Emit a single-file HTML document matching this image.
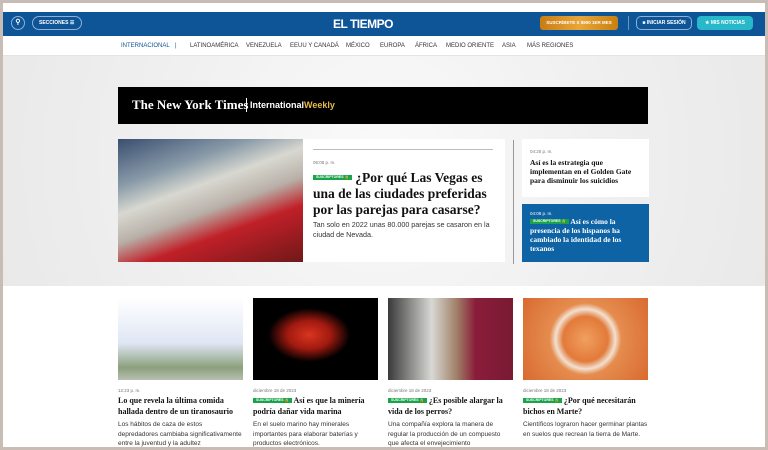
<!DOCTYPE html>
<html><head><meta charset="utf-8"><style>
*{margin:0;padding:0;box-sizing:border-box}
body{width:768px;height:450px;overflow:hidden;background:#c8bcb4;font-family:"Liberation Sans",sans-serif;position:relative}
.frame{position:absolute;left:3px;top:3px;width:762px;height:444px;background:#fff;overflow:hidden}
.hdr{position:absolute;left:0;top:9px;width:762px;height:24px;background:#0e5597}
.nav{position:absolute;left:0;top:33px;width:762px;height:20px;background:#fff;border-bottom:1px solid #e4e4e4;font-size:6px;color:#333}
.nav span{position:absolute;top:7px}
.hero{position:absolute;left:0;top:53px;width:762px;height:230px;background:radial-gradient(circle at 380px 100px,#fafafa 0,#efefef 60%,#e9e9e9 100%)}
.btn{position:absolute;border:1px solid #8fb0d4;border-radius:5px;color:#fff;font-size:5px;font-weight:bold}
.serif{font-family:"Liberation Serif",serif;font-weight:bold}
.tag{display:inline-block;background:#1aa34a;color:#fff;font-size:3.5px;line-height:5px;font-family:"Liberation Sans",sans-serif;padding:0 3px;vertical-align:middle;font-weight:bold;position:relative;top:-1px}
.card{position:absolute;top:295px;width:125px}
.card .im{height:82px}
.card .d{font-size:4.5px;color:#777;margin-top:8px}
.card h3{font-size:8px;line-height:10.5px;color:#111;margin-top:3px}
.card p{font-size:6.5px;line-height:9.5px;color:#333;margin-top:3px}
</style></head><body><div class="frame">
<div class="hdr">
 <div class="btn" style="left:8px;top:4px;width:14px;height:14px;border-radius:7px;text-align:center;line-height:12px;font-size:7px">&#9906;</div>
 <div class="btn" style="left:29px;top:4px;width:50px;height:14px;border-radius:7px;line-height:12px;padding-left:6px">SECCIONES ☰</div>
 <div style="position:absolute;left:330px;top:5px;color:#fff;font-weight:bold;font-size:12px;letter-spacing:-0.5px">EL TIEMPO</div>
 <div style="position:absolute;left:537px;top:4px;width:78px;height:14px;border-radius:3px;background:linear-gradient(90deg,#c87c12,#e9a63a,#c8800f);color:#fff;font-size:4.5px;font-weight:bold;line-height:14px;text-align:center">SUSCRÍBETE X $900 1ER MES</div>
 <div style="position:absolute;left:625px;top:4px;width:1px;height:14px;background:#6b93c0"></div>
 <div class="btn" style="left:633px;top:4px;width:56px;height:14px;line-height:12px;text-align:center">&#9632; INICIAR SESIÓN</div>
 <div style="position:absolute;left:694px;top:4px;width:56px;height:14px;border-radius:4px;background:#27b8c9;color:#fff;font-size:5px;font-weight:bold;line-height:14px;text-align:center">★ MIS NOTICIAS</div>
</div>
<div class="nav">
 <span style="left:118px;color:#0e5597">INTERNACIONAL</span><span style="left:172px;color:#0e5597">|</span>
 <span style="left:187px">LATINOAMÉRICA</span><span style="left:243px">VENEZUELA</span><span style="left:287px">EEUU Y CANADÁ</span><span style="left:343px">MÉXICO</span><span style="left:377px">EUROPA</span><span style="left:412px">ÁFRICA</span><span style="left:443px">MEDIO ORIENTE</span><span style="left:499px">ASIA</span><span style="left:524px">MÁS REGIONES</span>
</div>
<div class="hero">
 <div style="position:absolute;left:115px;top:31px;width:530px;height:37px;background:#000;color:#fff">
  <span style="position:absolute;left:14px;top:10px;font-family:'Liberation Serif',serif;font-size:13px;font-weight:bold;white-space:nowrap">The New York Times</span>
  <span style="position:absolute;left:128px;top:11px;width:1px;height:14px;background:#fff"></span>
  <span style="position:absolute;left:132px;top:13px;font-size:9px;font-weight:bold">International<span style="color:#e8b94a">Weekly</span></span>
 </div>
 <div style="position:absolute;left:115px;top:83px;width:387px;height:123px;background:#fff">
  <div style="position:absolute;left:0;top:0;width:185px;height:123px;background:linear-gradient(160deg,#3a4e70 0,#889aa8 25%,#d8d8d0 40%,#b8b0a8 55%,#c02028 70%,#701818 100%)"></div>
  <div style="position:absolute;left:195px;top:10px;width:180px;height:1px;background:#bbb"></div>
  <div style="position:absolute;left:195px;top:21px;font-size:4.5px;color:#777">05:08 p. m.</div>
  <div class="serif" style="position:absolute;left:195px;top:31px;width:190px;font-size:13.5px;line-height:16px;color:#111"><span class="tag">SUSCRIPTORES 🔒</span> ¿Por qué Las Vegas es una de las ciudades preferidas por las parejas para casarse?</div>
  <div style="position:absolute;left:195px;top:81px;width:185px;font-size:7.2px;line-height:10px;color:#333">Tan solo en 2022 unas 80.000 parejas se casaron en la ciudad de Nevada.</div>
 </div>
 <div style="position:absolute;left:510px;top:84px;width:1px;height:124px;background:#999"></div>
 <div style="position:absolute;left:519px;top:83px;width:127px;height:58px;background:#fff">
  <div style="position:absolute;left:8px;top:10px;font-size:4.5px;color:#777">04:25 p. m.</div>
  <div class="serif" style="position:absolute;left:8px;top:19px;width:108px;font-size:7.5px;line-height:9px;color:#111">Así es la estrategia que implementan en el Golden Gate para disminuir los suicidios</div>
 </div>
 <div style="position:absolute;left:519px;top:148px;width:127px;height:58px;background:#0e63a5;color:#fff">
  <div style="position:absolute;left:8px;top:7px;font-size:4.5px">04:08 p. m.</div>
  <div class="serif" style="position:absolute;left:8px;top:13px;width:108px;font-size:7.5px;line-height:9px"><span class="tag">SUSCRIPTORES 🔒</span> Así es cómo la presencia de los hispanos ha cambiado la identidad de los texanos</div>
 </div>
</div>
<div class="card" style="left:115px"><div class="im" style="background:linear-gradient(180deg,#fff 0,#dfe6f4 55%,#8ca07c 85%,#b8c0b0 100%)"></div><div class="d">12:23 p. m.</div><h3 class="serif">Lo que revela la última comida hallada dentro de un tiranosaurio</h3><p>Los hábitos de caza de estos depredadores cambiaba significativamente entre la juventud y la adultez</p></div>
<div class="card" style="left:250px"><div class="im" style="background:radial-gradient(ellipse at 45% 45%,#d8351e 0,#a21a10 22%,#000 42%)"></div><div class="d">diciembre 18 de 2023</div><h3 class="serif"><span class="tag">SUSCRIPTORES 🔒</span> Así es que la minería podría dañar vida marina</h3><p>En el suelo marino hay minerales importantes para elaborar baterías y productos electrónicos.</p></div>
<div class="card" style="left:385px"><div class="im" style="background:linear-gradient(90deg,#3a3a3a 0,#d8d8d4 35%,#a08068 55%,#8a1c3a 70%,#7a1a34 100%)"></div><div class="d">diciembre 18 de 2023</div><h3 class="serif"><span class="tag">SUSCRIPTORES 🔒</span> ¿Es posible alargar la vida de los perros?</h3><p>Una compañía explora la manera de regular la producción de un compuesto que afecta el envejecimiento</p></div>
<div class="card" style="left:520px"><div class="im" style="background:radial-gradient(circle at 50% 50%,#f0a060 0,#e27a3a 30%,#f2e0d0 40%,#e58c4e 48%,#d96a30 100%)"></div><div class="d">diciembre 18 de 2023</div><h3 class="serif"><span class="tag">SUSCRIPTORES 🔒</span> ¿Por qué necesitarán bichos en Marte?</h3><p>Científicos lograron hacer germinar plantas en suelos que recrean la tierra de Marte.</p></div>
</div></body></html>
